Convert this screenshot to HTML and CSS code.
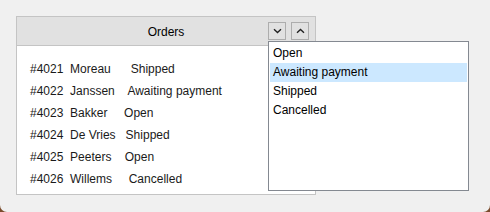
FILE: index.html
```html
<!DOCTYPE html>
<html lang="en">
<head>
    <meta charset="UTF-8">
    <title>Orders</title>
    <link rel="stylesheet" href="styles.css">
</head>
<body>

    <div class="window">
        <div class="panel">
            <div class="panel-header">
                <span></span>
                <span class="panel-title">Orders</span>
                <div class="header-buttons">
                    <button class="icon-btn" title="Next">
                        <svg width="9" height="6" viewBox="0 0 9 6"><path d="M1 1.2 L4.5 4.5 L8 1.2" fill="none" stroke="#222" stroke-width="1.4"/></svg>
                    </button>
                    <button class="icon-btn" title="Previous">
                        <svg width="9" height="6" viewBox="0 0 9 6"><path d="M1 4.8 L4.5 1.5 L8 4.8" fill="none" stroke="#222" stroke-width="1.4"/></svg>
                    </button>
                </div>
            </div>
            <div class="order-list">
                <div class="order-row">#4021  Moreau      Shipped</div>
                <div class="order-row">#4022  Janssen    Awaiting payment</div>
                <div class="order-row">#4023  Bakker     Open</div>
                <div class="order-row">#4024  De Vries   Shipped</div>
                <div class="order-row">#4025  Peeters    Open</div>
                <div class="order-row">#4026  Willems     Cancelled</div>
            </div>
        </div>

        <ul class="dropdown">
            <li>Open</li>
            <li class="selected">Awaiting payment</li>
            <li>Shipped</li>
            <li>Cancelled</li>
        </ul>
    </div>

</body>
</html>
```

FILE: styles.css
```css
html {
    background-color: #7a4b2c;
}

body {
    margin: 0;
    height: 212px;
    background-color: #f0f0f0;
    border-radius: 0 0 7px 7px;
    font-family: "Liberation Sans", Arial, sans-serif;
    font-size: 12px;
    color: #000;
}

.window {
    position: relative;
    padding: 16px;
}

.panel {
    width: 298px;
    height: 177px;
    border: 1px solid #c4c4c4;
    background-color: #fff;
}

.panel-header {
    display: grid;
    grid-template-columns: 1fr auto 1fr;
    align-items: center;
    height: 28px;
    background-color: #e1e1e1;
    border-bottom: 1px solid #c4c4c4;
}

.panel-title {
    text-align: center;
    padding-top: 1px;
}

.header-buttons {
    display: flex;
    justify-content: flex-end;
    gap: 5px;
    padding-right: 6px;
}

.icon-btn {
    width: 18px;
    height: 18px;
    padding: 0;
    display: flex;
    align-items: center;
    justify-content: center;
    background-color: #e1e1e1;
    border: 1px solid #adadad;
}

.order-list {
    padding: 12px 0 0 13px;
}

.order-row {
    height: 22px;
    line-height: 22px;
    white-space: pre;
    color: #1a1a1a;
}

.dropdown {
    position: absolute;
    left: 268px;
    top: 41px;
    width: 197px;
    height: 145px;
    margin: 0;
    padding: 2px 1px 1px;
    list-style: none;
    background-color: #fff;
    border: 1px solid #848991;
}

.dropdown li {
    height: 19px;
    line-height: 19px;
    padding-left: 3px;
}

.dropdown .selected {
    background-color: #cce8ff;
}
```
